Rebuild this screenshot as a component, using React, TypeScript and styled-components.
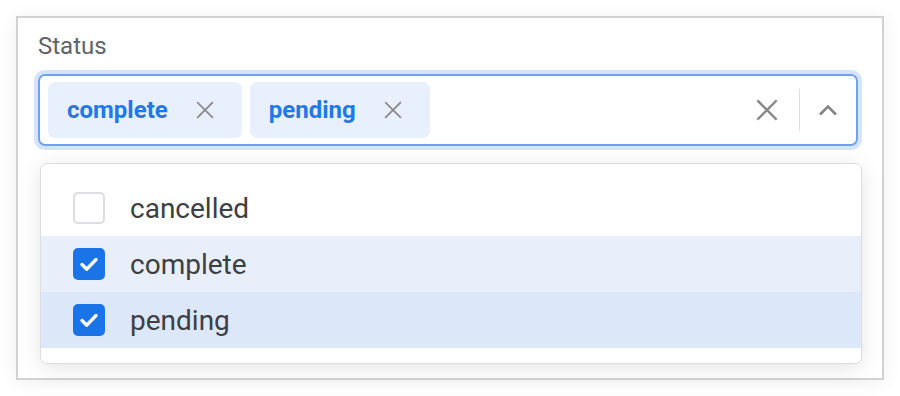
import React from "react";
import styled, { createGlobalStyle } from "styled-components";

const Global = createGlobalStyle`
  html, body { margin: 0; padding: 0; background: #ffffff; }
  body { font-family: Roboto, "Liberation Sans", Arial, sans-serif; }
  #root { padding: 16px; }
`;

const Frame = styled.div`
  box-sizing: border-box;
  width: 868px;
  height: 364px;
  border: 2px solid #d2d2d2;
  background: #ffffff;
  box-shadow: 0 2px 18px rgba(0, 0, 0, 0.07);
  padding: 14px 24px 14px 20px;
  display: flex;
  flex-direction: column;
`;

const Label = styled.div`
  font-size: 24px;
  line-height: 28px;
  color: #5f6368;
  margin-bottom: 14px;
`;

const Control = styled.div`
  box-sizing: border-box;
  height: 72px;
  border: 2px solid #6ea2ee;
  border-radius: 7px;
  box-shadow: 0 0 0 4px #d6e4fb;
  padding: 6px 8px;
  display: flex;
  align-items: center;
`;

const Chips = styled.div`
  flex: 1;
  display: flex;
  gap: 8px;
  height: 100%;
`;

const Chip = styled.div`
  display: flex;
  align-items: center;
  height: 56px;
  padding: 0 28px 0 19px;
  gap: 28px;
  background: #e8f0fd;
  border-radius: 7px;
  color: #2079e6;
  font-weight: 700;
  font-size: 24px;
`;

const Indicators = styled.div`
  display: flex;
  align-items: center;
  height: 100%;
  padding-right: 10px;
`;

const ClearBtn = styled.div`
  display: flex;
  align-items: center;
  padding: 0 21px 0 0;
`;

const Separator = styled.div`
  width: 1px;
  height: 42px;
  background: #dedede;
  margin-right: 18px;
`;

const Menu = styled.div`
  box-sizing: border-box;
  margin-top: 17px;
  margin-left: 2px;
  width: 822px;
  height: 201px;
  border: 1px solid #dcdde1;
  border-radius: 7px;
  background: #ffffff;
  box-shadow: 0 4px 22px rgba(0, 0, 0, 0.11);
  padding: 16px 0 14px;
  overflow: hidden;
`;

const Option = styled.div<{ $bg: string }>`
  height: 56px;
  display: flex;
  align-items: center;
  padding-left: 32px;
  gap: 25px;
  background: ${(p) => p.$bg};
  font-size: 28px;
  color: #3c4043;
`;

const Box = styled.div<{ $checked: boolean }>`
  box-sizing: border-box;
  width: 32px;
  height: 32px;
  border-radius: 5px;
  border: ${(p) => (p.$checked ? "none" : "2px solid #dcdde1")};
  background: ${(p) => (p.$checked ? "#1b73e8" : "#ffffff")};
  display: flex;
  align-items: center;
  justify-content: center;
`;

const XIcon = ({ size, stroke }: { size: number; stroke: number }) => (
  <svg width={size} height={size} viewBox="0 0 20 20">
    <path d="M2 2 L18 18 M18 2 L2 18" stroke="#8a8a8a" strokeWidth={stroke} strokeLinecap="square" fill="none" />
  </svg>
);

const Chevron = () => (
  <svg width={20} height={12} viewBox="0 0 20 12">
    <path d="M2 10.5 L10 2.5 L18 10.5" stroke="#848484" strokeWidth={2.6} fill="none" />
  </svg>
);

const Check = () => (
  <svg width={32} height={32} viewBox="0 0 32 32">
    <path d="M9 16.5 L13.8 21.2 L23 11.5" stroke="#ffffff" strokeWidth={3.4} strokeLinecap="round" strokeLinejoin="round" fill="none" />
  </svg>
);

const options = [
  { label: "cancelled", checked: false, bg: "#ffffff" },
  { label: "complete", checked: true, bg: "#e8effb" },
  { label: "pending", checked: true, bg: "#dce7f9" },
];

export default function App() {
  return (
    <>
      <Global />
      <Frame>
        <Label>Status</Label>
        <Control>
          <Chips>
            <Chip>
              complete
              <XIcon size={18} stroke={2} />
            </Chip>
            <Chip>
              pending
              <XIcon size={18} stroke={2} />
            </Chip>
          </Chips>
          <Indicators>
            <ClearBtn>
              <XIcon size={22} stroke={2.2} />
            </ClearBtn>
            <Separator />
            <Chevron />
          </Indicators>
        </Control>
        <Menu>
          {options.map((o) => (
            <Option key={o.label} $bg={o.bg}>
              <Box $checked={o.checked}>{o.checked && <Check />}</Box>
              {o.label}
            </Option>
          ))}
        </Menu>
      </Frame>
    </>
  );
}
